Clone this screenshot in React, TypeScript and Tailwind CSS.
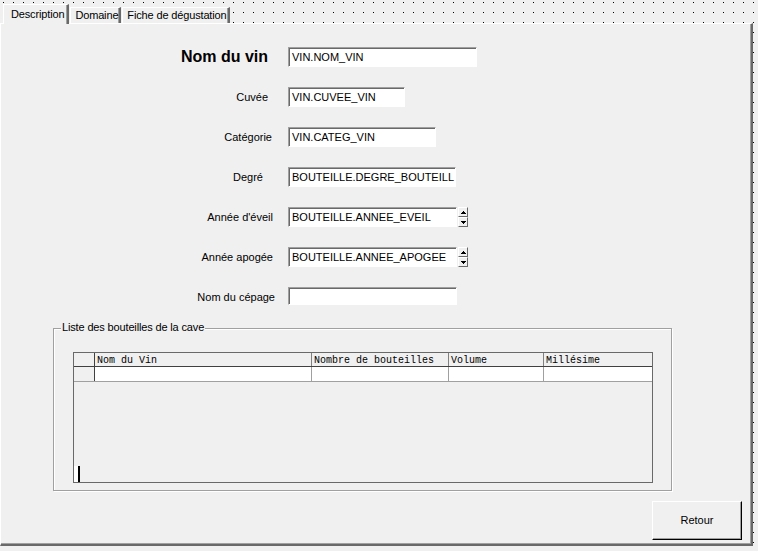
import React from "react";

type Row = {
  label: string;
  bold?: boolean;
  pr: string;
  field: string;
  value: string;
  spin?: boolean;
};

const rows: Row[] = [
  { label: "Nom du vin", bold: true, pr: "pr-[20px]", field: "w-[189px] h-[20px]", value: "VIN.NOM_VIN" },
  { label: "Cuvée", pr: "pr-[20px]", field: "w-[117px] h-[20px]", value: "VIN.CUVEE_VIN" },
  { label: "Catégorie", pr: "pr-[16px]", field: "w-[148px] h-[20px]", value: "VIN.CATEG_VIN" },
  { label: "Degré", pr: "pr-[25px]", field: "w-[168px] h-[20px]", value: "BOUTEILLE.DEGRE_BOUTEILL" },
  { label: "Année d'éveil", pr: "pr-[15px]", field: "w-[169px] h-[20px]", value: "BOUTEILLE.ANNEE_EVEIL", spin: true },
  { label: "Année apogée", pr: "pr-[15px]", field: "w-[169px] h-[20px]", value: "BOUTEILLE.ANNEE_APOGEE", spin: true },
  { label: "Nom du cépage", pr: "pr-[13px]", field: "w-[169px] h-[18px]", value: "" },
];

const columns = [
  { name: "Nom du Vin", w: "w-[217px]" },
  { name: "Nombre de bouteilles", w: "w-[137px]" },
  { name: "Volume", w: "w-[95px]" },
  { name: "Millésime", w: "flex-1" },
];

const tabs = [
  { label: "Description", cls: "relative z-10 -mb-px h-[20px] pl-[7px] pr-[3px] pt-[3px]" },
  { label: "Domaine", cls: "h-[16px] pl-[4px] pr-[1px] pt-[1px]" },
  { label: "Fiche de dégustation", cls: "h-[16px] pl-[4px] pr-[1px] pt-[1px]" },
];

function SpinButton({ up }: { up?: boolean }) {
  return (
    <div className="flex h-[10px] w-[10px] items-center justify-center border-l border-t border-r border-b border-white border-r-[#696969] border-b-[#696969] bg-[#f0f0f0]">
      <svg width="5" height="3" viewBox="0 0 5 3">
        {up ? <path d="M2 0h1v1h1v1h1v1H0V2h1V1h1z" fill="#000" /> : <path d="M0 0h5v1H4v1H3v1H2V2H1V1H0z" fill="#000" />}
      </svg>
    </div>
  );
}

export default function App() {
  return (
    <div className="flex h-[551px] w-[758px] flex-col overflow-hidden bg-[#000] bg-[linear-gradient(to_right,transparent_1px,#f0f0f0_1px),linear-gradient(to_bottom,transparent_1px,#f0f0f0_1px)] bg-size-[10px_10px] bg-position-[3px_2px] font-['Liberation_Sans',Arial,sans-serif] text-black">
      {/* tabs */}
      <div className="flex h-[23px] shrink-0 items-end gap-px pl-[3px]">
        {tabs.map((t) => (
          <div
            key={t.label}
            className={`flex items-start border-l border-t border-r-2 border-white border-r-[#696969] bg-[#f0f0f0] shadow-[inset_-1px_0_0_#a0a0a0] ${t.cls}`}
          >
            <span className="text-[11px] leading-[13px] tracking-[-0.15px]">{t.label}</span>
          </div>
        ))}
      </div>

      {/* page */}
      <div className="flex h-[523px] w-[753px] shrink-0 flex-col border-l border-t border-r-2 border-b-2 border-white border-r-[#696969] border-b-[#696969] bg-[#f0f0f0] shadow-[inset_-1px_-1px_0_#a0a0a0]">
        <div className="flex flex-col gap-[20px] pt-[23px]">
          {rows.map((r) => (
            <div key={r.label} className="flex h-[20px] items-start">
              <div className={`flex h-[20px] w-[287px] shrink-0 items-center justify-end ${r.pr}`}>
                <span className={r.bold ? "text-[16px] font-bold leading-[18px]" : "text-[11px] leading-[13px]"}>{r.label}</span>
              </div>
              <div className={`${r.field} shrink-0 border border-l-[#a0a0a0] border-t-[#a0a0a0] border-r-white border-b-white`}>
                <div className="flex h-full items-center border-l border-t border-l-[#696969] border-t-[#696969] bg-white pl-[2px] text-[11px] leading-[13px]">
                  {r.value}
                </div>
              </div>
              {r.spin && (
                <div className="ml-px flex flex-col">
                  <SpinButton up />
                  <SpinButton />
                </div>
              )}
            </div>
          ))}
        </div>

        {/* group box */}
        <div className="relative ml-[52px] mt-[21px] h-[163px] w-[619px] border border-[#a0a0a0] shadow-[1px_1px_0_#fff,inset_1px_1px_0_#fff]">
          <span className="absolute -top-[8px] left-[7px] bg-[#f0f0f0] px-px text-[11px] leading-[13px] tracking-[-0.15px]">
            Liste des bouteilles de la cave
          </span>

          <div className="ml-[19px] mt-[23px] flex h-[131px] w-[580px] flex-col border border-[#696969] bg-[#f0f0f0] font-['Liberation_Mono',monospace] text-[10px]">
            <div className="flex h-[14px] border-b border-[#404040]">
              <div className="w-[21px] border-r border-[#404040]" />
              {columns.map((c, i) => (
                <div
                  key={c.name}
                  className={`${c.w} ${i < columns.length - 1 ? "border-r border-[#808080]" : ""} pl-[2px] pt-[2px] leading-[11px]`}
                >
                  {c.name}
                </div>
              ))}
            </div>
            <div className="flex h-[15px] border-b border-[#a0a0a0]">
              <div className="w-[21px] border-r border-[#404040]" />
              {columns.map((c, i) => (
                <div
                  key={c.name}
                  className={`${c.w} bg-white ${i < columns.length - 1 ? "border-r border-[#a0a0a0]" : ""}`}
                />
              ))}
            </div>
            <div className="mt-auto flex h-[16px] items-stretch">
              <div className="w-[4px] bg-white" />
              <div className="w-[2px] bg-black" />
            </div>
          </div>
        </div>

        {/* buttons */}
        <div className="mt-[10px] flex justify-end pr-[9px]">
          <button className="flex h-[39px] w-[90px] items-center justify-center border border-white border-r-black border-b-black bg-[#f0f0f0] text-[11px] leading-[13px] shadow-[inset_-1px_-1px_0_#a0a0a0]">
            Retour
          </button>
        </div>
      </div>
    </div>
  );
}
